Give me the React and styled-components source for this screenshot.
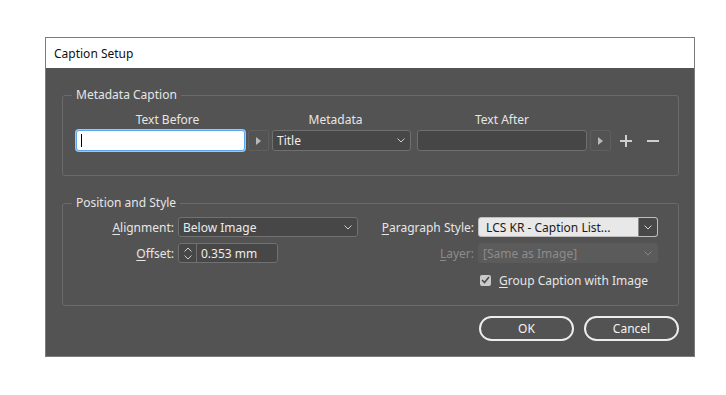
import React from "react";
import styled, { createGlobalStyle } from "styled-components";

const Global = createGlobalStyle`
  html, body { margin: 0; background: #fff; }
  body { font-family: "Noto Sans", "Liberation Sans", sans-serif; }
`;

const Page = styled.div`
  width: 726px;
  height: 395px;
  padding: 37px 0 0 45px;
  box-sizing: border-box;
`;

const Dialog = styled.div`
  width: 650px;
  border: 1px solid #7c7c7c;
  box-sizing: border-box;
  background: #535353;
`;

const TitleBar = styled.div`
  height: 30px;
  background: #fff;
  display: flex;
  align-items: center;
  padding-left: 8px;
  font-size: 12px;
  color: #111;
`;

const Body = styled.div`
  padding: 20px 15px 15px 16px;
  color: #e6e6e6;
  font-size: 12px;
`;

const Group = styled.fieldset`
  margin: ${(p) => p.$top || 0}px 0 0 0;
  padding: 0;
  border: 1px solid #6a6a6a;
  border-radius: 3px;
  min-width: 0;
`;

const Legend = styled.legend`
  margin-left: 9px;
  padding: 0 4px;
  line-height: 14px;
  font-size: 12px;
  color: #e6e6e6;
`;

const CaptionBlock = styled.div`
  display: flex;
  flex-direction: column;
  gap: 3px;
  padding: 11px 0 24px 13px;
`;

const CaptionRow = styled.div`
  display: grid;
  grid-template-columns: 169px 21px 139px 173px 21px 1fr;
  column-gap: 3px;
  align-items: center;
`;

const Heading = styled.div`
  line-height: 14px;
  text-align: center;
  grid-column: ${(p) => p.$col};
  padding-left: ${(p) => Math.max(p.$shift || 0, 0)}px;
  padding-right: ${(p) => Math.max(-(p.$shift || 0), 0)}px;
`;

const TextField = styled.div`
  height: 21px;
  box-sizing: border-box;
  border-radius: 3px;
  margin-left: ${(p) => p.$offset || 0}px;
  border: 1px solid ${(p) => (p.$focus ? "#5aa7f0" : "#6f6f6f")};
  background: ${(p) => (p.$focus ? "#ffffff" : "#464646")};
  box-shadow: ${(p) => (p.$focus ? "0 0 0 1px #9cc8f2" : "none")};
  display: flex;
  align-items: center;
  padding-left: 4px;
`;

const Caret = styled.span`
  width: 1px;
  height: 13px;
  background: #000;
`;

const ArrowButton = styled.div`
  height: 21px;
  box-sizing: border-box;
  border: 1px solid #5f5f5f;
  border-radius: 2px;
  display: flex;
  align-items: center;
  justify-content: center;
`;

const Select = styled.div`
  height: ${(p) => p.$h || 20}px;
  box-sizing: border-box;
  border-radius: 3px;
  border: 1px solid ${(p) => (p.$disabled ? "#5b5b5b" : p.$light ? "#bdbdbd" : "#707070")};
  background: ${(p) => (p.$disabled ? "#5b5b5b" : p.$light ? "#e8e8e8" : "#474747")};
  color: ${(p) => (p.$disabled ? "#8c8c8c" : p.$light ? "#1b1b1b" : "#ececec")};
  display: flex;
  align-items: center;
  padding-left: 4px;
  overflow: hidden;
`;

const SelectText = styled.span`
  flex: 1;
  white-space: nowrap;
`;

const ChevronCell = styled.span`
  width: ${(p) => (p.$boxed ? 18 : 14)}px;
  align-self: stretch;
  display: flex;
  align-items: center;
  justify-content: center;
  background: ${(p) => (p.$boxed ? "#484848" : "transparent")};
  border-left: ${(p) => (p.$boxed ? "1px solid #8a8a8a" : "none")};
  margin-right: ${(p) => (p.$boxed ? 0 : 2)}px;
`;

const PlusMinus = styled.div`
  display: flex;
  gap: 15px;
  padding-left: 6px;
  align-items: center;
`;

const StyleGrid = styled.div`
  display: grid;
  grid-template-columns: 111px 180px 1fr 180px;
  column-gap: 4px;
  row-gap: 6px;
  padding: 7px 20px 16px 0;
  align-items: center;
`;

const Label = styled.label`
  text-align: right;
  white-space: nowrap;
  color: ${(p) => (p.$disabled ? "#8c8c8c" : "#e6e6e6")};
  u { text-decoration-thickness: 1px; text-underline-offset: 2px; }
`;

const Spinner = styled.div`
  width: 100px;
  height: 20px;
  box-sizing: border-box;
  border: 1px solid #707070;
  border-radius: 3px;
  background: #474747;
  display: flex;
  align-items: center;
`;

const SpinArrows = styled.span`
  width: 17px;
  align-self: stretch;
  border-right: 1px solid #707070;
  display: flex;
  flex-direction: column;
  align-items: center;
  justify-content: center;
  gap: 3px;
`;

const SpinValue = styled.span`
  padding-left: 4px;
  color: #ececec;
`;

const CheckRow = styled.div`
  grid-column: 4;
  display: flex;
  align-items: center;
  gap: 8px;
  padding-left: 2px;
  height: 18px;
  margin-top: 2px;
  u { text-underline-offset: 2px; }
`;

const CheckBox = styled.span`
  width: 11px;
  height: 11px;
  border-radius: 2px;
  background: #c9c9c9;
  display: flex;
  align-items: center;
  justify-content: center;
`;

const Footer = styled.div`
  display: flex;
  justify-content: flex-end;
  gap: 10px;
  padding-top: 10px;
`;

const Button = styled.button`
  width: 95px;
  height: 25px;
  border-radius: 13px;
  border: 2px solid #ededed;
  background: transparent;
  color: #f2f2f2;
  font-family: inherit;
  font-size: 12px;
  padding: 0;
`;

const Tri = () => (
  <svg width="5" height="8" viewBox="0 0 5 8">
    <path d="M0 0 L5 4 L0 8 Z" fill="#b9b9b9" />
  </svg>
);

const Chevron = ({ color = "#cfcfcf", up }) => (
  <svg width="8" height="5" viewBox="0 0 8 5">
    <path
      d={up ? "M0.5 4.5 L4 1 L7.5 4.5" : "M0.5 0.5 L4 4 L7.5 0.5"}
      fill="none"
      stroke={color}
      strokeWidth="1"
    />
  </svg>
);

const Plus = () => (
  <svg width="12" height="12" viewBox="0 0 12 12">
    <path d="M6 0 V12 M0 6 H12" stroke="#cfcfcf" strokeWidth="2" />
  </svg>
);

const Minus = () => (
  <svg width="12" height="12" viewBox="0 0 12 12">
    <path d="M0 6 H12" stroke="#cfcfcf" strokeWidth="2" />
  </svg>
);

const Check = () => (
  <svg width="9" height="8" viewBox="0 0 9 8">
    <path d="M1 4 L3.5 6.5 L8 1" fill="none" stroke="#4a4a4a" strokeWidth="1.6" />
  </svg>
);

export default function App() {
  return (
    <Page>
      <Global />
      <Dialog>
        <TitleBar>Caption Setup</TitleBar>
        <Body>
          <Group>
            <Legend>Metadata Caption</Legend>
            <CaptionBlock>
              <CaptionRow>
                <Heading $col="1 / 3" $shift={-10}>Text Before</Heading>
                <Heading $col="3" $shift={-12}>Metadata</Heading>
                <Heading $col="4" $shift={3}>Text After</Heading>
              </CaptionRow>
              <CaptionRow>
                <TextField $focus>
                  <Caret />
                </TextField>
                <ArrowButton>
                  <Tri />
                </ArrowButton>
                <Select $h={21}>
                  <SelectText>Title</SelectText>
                  <ChevronCell>
                    <Chevron />
                  </ChevronCell>
                </Select>
                <TextField $offset={3} />
                <ArrowButton>
                  <Tri />
                </ArrowButton>
                <PlusMinus>
                  <Plus />
                  <Minus />
                </PlusMinus>
              </CaptionRow>
            </CaptionBlock>
          </Group>

          <Group $top={20}>
            <Legend>Position and Style</Legend>
            <StyleGrid>
              <Label>
                <u>A</u>lignment:
              </Label>
              <Select>
                <SelectText>Below Image</SelectText>
                <ChevronCell>
                  <Chevron />
                </ChevronCell>
              </Select>
              <Label>
                <u>P</u>aragraph Style:
              </Label>
              <Select $light>
                <SelectText>&nbsp;LCS KR - Caption List...</SelectText>
                <ChevronCell $boxed>
                  <Chevron color="#d8d8d8" />
                </ChevronCell>
              </Select>

              <Label>
                <u>O</u>ffset:
              </Label>
              <Spinner>
                <SpinArrows>
                  <Chevron up />
                  <Chevron />
                </SpinArrows>
                <SpinValue>0.353 mm</SpinValue>
              </Spinner>
              <Label $disabled>
                <u>L</u>ayer:
              </Label>
              <Select $disabled>
                <SelectText>[Same as Image]</SelectText>
                <ChevronCell>
                  <Chevron color="#8a8a8a" />
                </ChevronCell>
              </Select>

              <CheckRow>
                <CheckBox>
                  <Check />
                </CheckBox>
                <span>
                  <u>G</u>roup Caption with Image
                </span>
              </CheckRow>
            </StyleGrid>
          </Group>

          <Footer>
            <Button>OK</Button>
            <Button>Cancel</Button>
          </Footer>
        </Body>
      </Dialog>
    </Page>
  );
}
